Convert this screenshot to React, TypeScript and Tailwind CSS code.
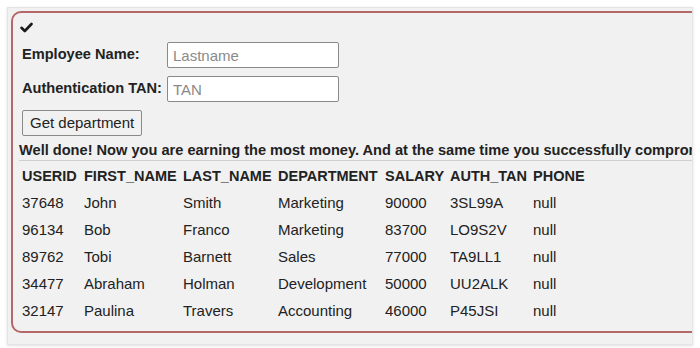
import React from "react";

interface Employee {
  userid: string;
  firstName: string;
  lastName: string;
  department: string;
  salary: string;
  authTan: string;
  phone: string;
}

const employees: Employee[] = [
  { userid: "37648", firstName: "John", lastName: "Smith", department: "Marketing", salary: "90000", authTan: "3SL99A", phone: "null" },
  { userid: "96134", firstName: "Bob", lastName: "Franco", department: "Marketing", salary: "83700", authTan: "LO9S2V", phone: "null" },
  { userid: "89762", firstName: "Tobi", lastName: "Barnett", department: "Sales", salary: "77000", authTan: "TA9LL1", phone: "null" },
  { userid: "34477", firstName: "Abraham", lastName: "Holman", department: "Development", salary: "50000", authTan: "UU2ALK", phone: "null" },
  { userid: "32147", firstName: "Paulina", lastName: "Travers", department: "Accounting", salary: "46000", authTan: "P45JSI", phone: "null" },
];

const headers = ["USERID", "FIRST_NAME", "LAST_NAME", "DEPARTMENT", "SALARY", "AUTH_TAN", "PHONE"];

const cols = "grid grid-cols-[62px_99px_95px_107px_65px_83px_auto] items-center h-[27px] pl-[3px]";

const App: React.FC = () => {
  return (
    <div className="w-[700px] h-[348px] bg-white pt-[7px] pl-[7px] font-['Liberation_Sans',Arial,sans-serif] text-[#222]">
      <div className="w-[686px] h-[338px] bg-[#f1f1f1] border border-[#e4e4e4] shadow-[0_1px_3px_rgba(0,0,0,0.12)] overflow-hidden pt-[3px] pl-[3px]">
        <div className="w-[740px] h-[322px] border-2 border-[#b46868] rounded-[10px] bg-[#f1f1f1] pt-[8px] pl-[6px]">
          {/* success mark */}
          <svg width="13" height="11" viewBox="0 0 13 11" className="ml-[1px] mt-[1px]">
            <path d="M1.5 5.8 L4.8 9 L11.5 2" fill="none" stroke="#1a1a1a" strokeWidth="2.6" strokeLinecap="round" strokeLinejoin="round" />
          </svg>

          <div className="grid grid-cols-[auto_172px] gap-x-[5px] gap-y-[8px] mt-[9px] ml-[3px] w-max items-center">
            <label className="text-[14.6px] font-bold">Employee Name:</label>
            <input
              placeholder="Lastname"
              className="h-[26px] w-[172px] border border-[#8a8a8a] rounded-[2px] bg-white px-[5px] text-[15px] placeholder:text-[#8a8a8a] outline-none"
            />
            <label className="text-[14.6px] font-bold">Authentication TAN:</label>
            <input
              placeholder="TAN"
              className="h-[26px] w-[172px] border border-[#8a8a8a] rounded-[2px] bg-white px-[5px] text-[15px] placeholder:text-[#8a8a8a] outline-none"
            />
          </div>

          <button className="mt-[8px] ml-[3px] h-[26px] px-[7px] border border-[#8a8a8a] rounded-[2px] bg-[#f1f1f1] text-[15px] text-[#222]">
            Get department
          </button>

          <div className="mt-[5px] h-[20px] leading-[19px] border-b border-[#d0d0d0] text-[14.6px] font-bold whitespace-nowrap">
            Well done! Now you are earning the most money. And at the same time you successfully compromised the integrity of data by changing the salary!
          </div>

          <div className={`${cols} mt-[2px] text-[14.5px] font-bold`}>
            {headers.map((h) => (
              <span key={h}>{h}</span>
            ))}
          </div>
          {employees.map((e) => (
            <div key={e.userid} className={`${cols} text-[15px]`}>
              <span>{e.userid}</span>
              <span>{e.firstName}</span>
              <span>{e.lastName}</span>
              <span>{e.department}</span>
              <span>{e.salary}</span>
              <span>{e.authTan}</span>
              <span>{e.phone}</span>
            </div>
          ))}
        </div>
      </div>
    </div>
  );
};

export default App;
